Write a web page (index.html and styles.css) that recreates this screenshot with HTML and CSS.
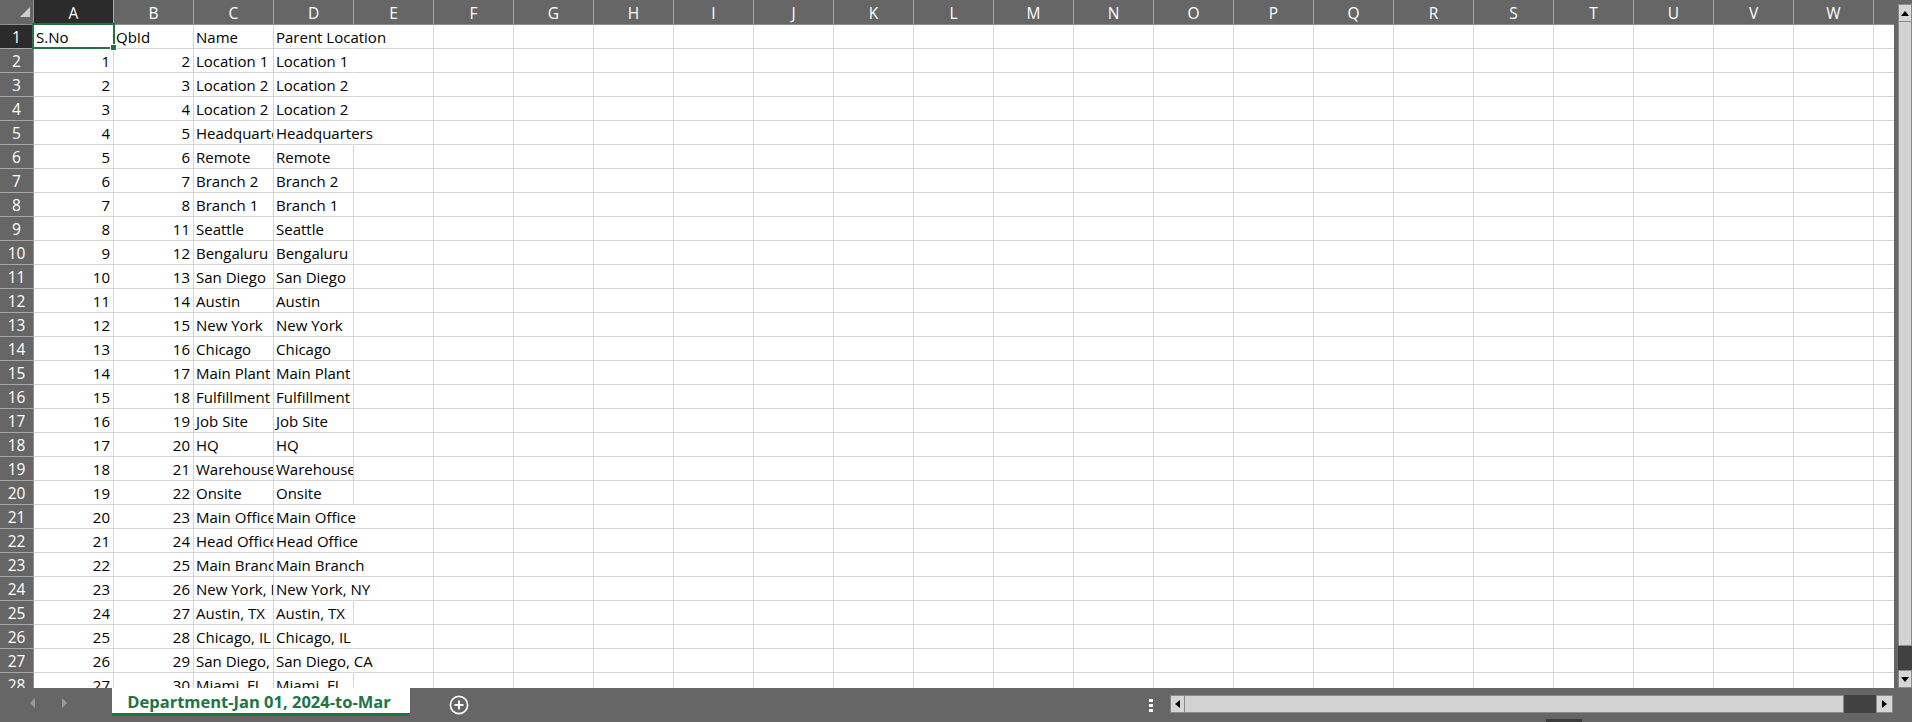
FILE: index.html
```html
<!DOCTYPE html>
<html>
<head>
<meta charset="utf-8">
<link rel="stylesheet" href="styles.css">
</head>
<body>
<div class="app">
  <div class="main">
    <div class="sheet">
      <div class="colheads">
        <div class="corner"><svg width="34" height="24" viewBox="0 0 34 24"><polygon points="30,7 30,17 20,17" fill="#cfcfcf"/></svg></div>
        <div class="ch sel">A</div><div class="ch">B</div><div class="ch">C</div><div class="ch">D</div><div class="ch">E</div><div class="ch">F</div><div class="ch">G</div><div class="ch">H</div><div class="ch">I</div><div class="ch">J</div><div class="ch">K</div><div class="ch">L</div><div class="ch">M</div><div class="ch">N</div><div class="ch">O</div><div class="ch">P</div><div class="ch">Q</div><div class="ch">R</div><div class="ch">S</div><div class="ch">T</div><div class="ch">U</div><div class="ch">V</div><div class="ch">W</div><div class="ch last"></div>
      </div>
      <div class="row"><div class="rh sel">1</div><div class="c">S.No</div><div class="c">QbId</div><div class="c">Name</div><div class="c ov">Parent Location</div><div class="c"></div><div class="rest"></div></div>
      <div class="row"><div class="rh">2</div><div class="c n">1</div><div class="c n">2</div><div class="c">Location 1</div><div class="c ov">Location 1</div><div class="c"></div><div class="rest"></div></div>
      <div class="row"><div class="rh">3</div><div class="c n">2</div><div class="c n">3</div><div class="c">Location 2</div><div class="c ov">Location 2</div><div class="c"></div><div class="rest"></div></div>
      <div class="row"><div class="rh">4</div><div class="c n">3</div><div class="c n">4</div><div class="c">Location 2</div><div class="c ov">Location 2</div><div class="c"></div><div class="rest"></div></div>
      <div class="row"><div class="rh">5</div><div class="c n">4</div><div class="c n">5</div><div class="c">Headquarters</div><div class="c ov">Headquarters</div><div class="c"></div><div class="rest"></div></div>
      <div class="row"><div class="rh">6</div><div class="c n">5</div><div class="c n">6</div><div class="c">Remote</div><div class="c">Remote</div><div class="c"></div><div class="rest"></div></div>
      <div class="row"><div class="rh">7</div><div class="c n">6</div><div class="c n">7</div><div class="c">Branch 2</div><div class="c">Branch 2</div><div class="c"></div><div class="rest"></div></div>
      <div class="row"><div class="rh">8</div><div class="c n">7</div><div class="c n">8</div><div class="c">Branch 1</div><div class="c">Branch 1</div><div class="c"></div><div class="rest"></div></div>
      <div class="row"><div class="rh">9</div><div class="c n">8</div><div class="c n">11</div><div class="c">Seattle</div><div class="c">Seattle</div><div class="c"></div><div class="rest"></div></div>
      <div class="row"><div class="rh">10</div><div class="c n">9</div><div class="c n">12</div><div class="c">Bengaluru</div><div class="c">Bengaluru</div><div class="c"></div><div class="rest"></div></div>
      <div class="row"><div class="rh">11</div><div class="c n">10</div><div class="c n">13</div><div class="c">San Diego</div><div class="c">San Diego</div><div class="c"></div><div class="rest"></div></div>
      <div class="row"><div class="rh">12</div><div class="c n">11</div><div class="c n">14</div><div class="c">Austin</div><div class="c">Austin</div><div class="c"></div><div class="rest"></div></div>
      <div class="row"><div class="rh">13</div><div class="c n">12</div><div class="c n">15</div><div class="c">New York</div><div class="c">New York</div><div class="c"></div><div class="rest"></div></div>
      <div class="row"><div class="rh">14</div><div class="c n">13</div><div class="c n">16</div><div class="c">Chicago</div><div class="c">Chicago</div><div class="c"></div><div class="rest"></div></div>
      <div class="row"><div class="rh">15</div><div class="c n">14</div><div class="c n">17</div><div class="c">Main Plant</div><div class="c">Main Plant</div><div class="c"></div><div class="rest"></div></div>
      <div class="row"><div class="rh">16</div><div class="c n">15</div><div class="c n">18</div><div class="c">Fulfillment</div><div class="c">Fulfillment</div><div class="c"></div><div class="rest"></div></div>
      <div class="row"><div class="rh">17</div><div class="c n">16</div><div class="c n">19</div><div class="c">Job Site</div><div class="c">Job Site</div><div class="c"></div><div class="rest"></div></div>
      <div class="row"><div class="rh">18</div><div class="c n">17</div><div class="c n">20</div><div class="c">HQ</div><div class="c">HQ</div><div class="c"></div><div class="rest"></div></div>
      <div class="row"><div class="rh">19</div><div class="c n">18</div><div class="c n">21</div><div class="c">Warehouse</div><div class="c">Warehouse</div><div class="c"></div><div class="rest"></div></div>
      <div class="row"><div class="rh">20</div><div class="c n">19</div><div class="c n">22</div><div class="c">Onsite</div><div class="c">Onsite</div><div class="c"></div><div class="rest"></div></div>
      <div class="row"><div class="rh">21</div><div class="c n">20</div><div class="c n">23</div><div class="c">Main Office</div><div class="c ov">Main Office</div><div class="c"></div><div class="rest"></div></div>
      <div class="row"><div class="rh">22</div><div class="c n">21</div><div class="c n">24</div><div class="c">Head Office</div><div class="c ov">Head Office</div><div class="c"></div><div class="rest"></div></div>
      <div class="row"><div class="rh">23</div><div class="c n">22</div><div class="c n">25</div><div class="c">Main Branch</div><div class="c ov">Main Branch</div><div class="c"></div><div class="rest"></div></div>
      <div class="row"><div class="rh">24</div><div class="c n">23</div><div class="c n">26</div><div class="c">New York, NY</div><div class="c ov">New York, NY</div><div class="c"></div><div class="rest"></div></div>
      <div class="row"><div class="rh">25</div><div class="c n">24</div><div class="c n">27</div><div class="c">Austin, TX</div><div class="c">Austin, TX</div><div class="c"></div><div class="rest"></div></div>
      <div class="row"><div class="rh">26</div><div class="c n">25</div><div class="c n">28</div><div class="c">Chicago, IL</div><div class="c ov">Chicago, IL</div><div class="c"></div><div class="rest"></div></div>
      <div class="row"><div class="rh">27</div><div class="c n">26</div><div class="c n">29</div><div class="c">San Diego, CA</div><div class="c ov">San Diego, CA</div><div class="c"></div><div class="rest"></div></div>
      <div class="row"><div class="rh">28</div><div class="c n">27</div><div class="c n">30</div><div class="c">Miami, FL</div><div class="c">Miami, FL</div><div class="c"></div><div class="rest"></div></div>
      <div class="selbox"></div>
      <div class="handle"></div>
    </div>
    <div class="vgap"></div>
    <div class="vscroll">
      <div class="vbtn"><span class="tri-up"></span></div>
      <div class="vthumb"></div>
      <div class="vtrack"></div>
      <div class="vbtn"><span class="tri-down"></span></div>
    </div>
  </div>
  <div class="tabbar">
    <div class="nav"><span class="nav-left"></span><span class="nav-right"></span></div>
    <div class="tab">Department-Jan 01, 2024-to-Mar</div>
    <div class="add"><svg width="20" height="20" viewBox="0 0 20 20"><circle cx="10" cy="10" r="8.6" fill="none" stroke="#fff" stroke-width="1.6"/><path d="M10 5.5v9M5.5 10h9" stroke="#fff" stroke-width="1.8"/></svg></div>
    <div class="spacer"></div>
    <div class="dots"><span></span><span></span><span></span></div>
    <div class="hscroll">
      <div class="hbtn"><span class="tri-left"></span></div>
      <div class="hthumb"></div>
      <div class="htrack"></div>
      <div class="hbtn r"><span class="tri-right"></span></div>
    </div>
    <div class="tail"></div>
    <div class="grip"></div>
  </div>
</div>
</body>
</html>
```
FILE: styles.css
```css
* { box-sizing: border-box; }
body { margin: 0; background: #666666; font-family: "Open Sans", "Noto Sans", sans-serif; }
.app { width: 1912px; height: 722px; display: flex; flex-direction: column; overflow: hidden; }
.main { display: flex; height: 688px; flex: none; }
.sheet { position: relative; width: 1894px; height: 688px; overflow: hidden; background: #ffffff; flex: none; }
.colheads { display: flex; height: 25px; background: #666666; }
.corner { width: 34px; height: 25px; flex: none; border-right: 1px solid #8e8e8e; border-bottom: 1px solid #8e8e8e; }
.corner svg { display: block; }
.ch { width: 80px; height: 25px; flex: none; color: #ffffff; font-size: 15.5px; line-height: 24px; padding-top: 1px; text-align: center; border-right: 1px solid #a8a8a8; border-bottom: 1px solid #8e8e8e; }
.ch.last { flex: 1; border-right: none; }
.ch.sel { background: #2b2b2b; }
.row { display: flex; height: 24px; }
.rh { width: 34px; flex: none; background: #666666; color: #ffffff; font-size: 15.5px; line-height: 23px; padding-top: 1px; text-align: center; border-right: 1px solid #8e8e8e; border-bottom: 1px solid #a8a8a8; }
.rh.sel { background: #2b2b2b; }
.c { width: 80px; flex: none; height: 24px; border-right: 1px solid #d4d4d4; border-bottom: 1px solid #d4d4d4; padding: 1px 3px 0 2px; font-size: 15px; line-height: 23px; color: #000000; white-space: nowrap; overflow: hidden; }
.c.n { text-align: right; }
.c.ov { overflow: visible; border-right-color: transparent; }
.rest { flex: 1; height: 24px; border-bottom: 1px solid #d4d4d4; background: repeating-linear-gradient(90deg, transparent 0 79px, #d4d4d4 79px 80px); }
.selbox { position: absolute; left: 32px; top: 23px; width: 83px; height: 26px; border: 2px solid #217346; }
.handle { position: absolute; left: 110px; top: 44px; width: 7px; height: 7px; background: #217346; border: 1px solid #ffffff; }
.vgap { width: 4px; flex: none; }
.vscroll { width: 14px; flex: none; display: flex; flex-direction: column; padding-top: 4px; }
.vbtn { height: 18px; flex: none; background: #d6d6d6; border: 1px solid #8a8a8a; display: flex; align-items: center; justify-content: center; }
.vthumb { flex: 1; background: #d3d3d3; border: 1px solid #8a8a8a; border-top: none; }
.vtrack { height: 24px; flex: none; background: #414141; }
.tri-up { width: 0; height: 0; border-left: 4px solid transparent; border-right: 4px solid transparent; border-bottom: 5px solid #000; }
.tri-down { width: 0; height: 0; border-left: 4px solid transparent; border-right: 4px solid transparent; border-top: 5px solid #000; }
.tabbar { position: relative; height: 34px; display: flex; align-items: flex-start; }
.nav { width: 112px; flex: none; display: flex; padding: 10px 0 0 30px; gap: 27px; }
.nav-left { width: 0; height: 0; border-top: 5px solid transparent; border-bottom: 5px solid transparent; border-right: 5px solid #9a9a9a; }
.nav-right { width: 0; height: 0; border-top: 5px solid transparent; border-bottom: 5px solid transparent; border-left: 5px solid #9a9a9a; }
.tab { width: 298px; flex: none; height: 28px; background: #ffffff; border-bottom: 3px solid #217346; color: #217346; font-weight: 700; font-size: 16.5px; line-height: 27px; text-align: center; padding-right: 4px; white-space: nowrap; }
.add { margin: 7px 0 0 39px; flex: none; }
.add svg { display: block; }
.spacer { flex: 1; }
.dots { width: 4px; flex: none; margin-top: 11px; display: flex; flex-direction: column; gap: 2px; }
.dots span { width: 4px; height: 3px; background: #ffffff; }
.hscroll { width: 723px; height: 18px; margin: 7px 0 0 17px; flex: none; display: flex; }
.hbtn { width: 15px; flex: none; background: #d6d6d6; border: 1px solid #8a8a8a; display: flex; align-items: center; justify-content: center; }
.hbtn.r { width: 17px; }
.hthumb { flex: 1; background: #d3d3d3; border: 1px solid #8a8a8a; border-left: none; }
.htrack { width: 32px; flex: none; background: #414141; }
.tri-left { width: 0; height: 0; border-top: 4px solid transparent; border-bottom: 4px solid transparent; border-right: 5px solid #000; }
.tri-right { width: 0; height: 0; border-top: 4px solid transparent; border-bottom: 4px solid transparent; border-left: 5px solid #000; }
.tail { width: 19px; flex: none; }
.grip { position: absolute; left: 1546px; top: 31px; width: 36px; height: 3px; background: #3c3c3c; }
```
